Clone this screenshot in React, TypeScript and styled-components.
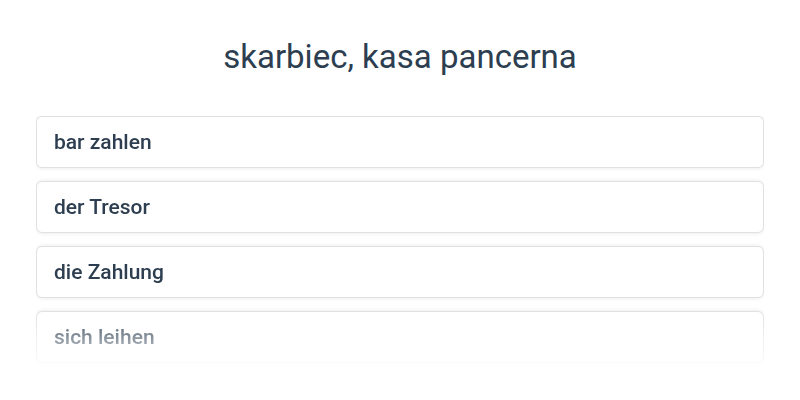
import React from "react";
import styled, { createGlobalStyle } from "styled-components";

const GlobalStyle = createGlobalStyle`
    html, body {
        margin: 0;
        padding: 0;
        background: #ffffff;
    }
    body {
        font-family: Roboto, "Liberation Sans", sans-serif;
        color: #2c3e50;
    }
`;

const Page = styled.div`
    width: 800px;
    height: 400px;
    box-sizing: border-box;
    padding: 37px 36px 0;
    display: flex;
    flex-direction: column;
    overflow: hidden;
`;

const Title = styled.h1`
    margin: 0 0 39px;
    font-size: 33px;
    font-weight: 400;
    line-height: 40px;
    text-align: center;
    color: #2c3e50;
`;

// List fades out towards the bottom edge
const List = styled.ul`
    list-style: none;
    margin: 0;
    padding: 0;
    height: 256px;
    display: flex;
    flex-direction: column;
    gap: 13px;
    -webkit-mask-image: linear-gradient(to bottom, #000 76%, transparent 100%);
    mask-image: linear-gradient(to bottom, #000 76%, transparent 100%);
`;

const Option = styled.li`
    box-sizing: border-box;
    height: 52px;
    flex-shrink: 0;
    display: flex;
    align-items: center;
    padding: 0 17px;
    border: 1px solid #dfe1e4;
    border-radius: 6px;
    background: #ffffff;
    box-shadow: 0 0 4px rgba(0, 0, 0, 0.1);
    font-size: 21px;
    font-weight: 500;
    color: #2c3e50;
    cursor: pointer;
`;

const options = ["bar zahlen", "der Tresor", "die Zahlung", "sich leihen"];

const App = (): React.ReactElement => (
    <>
        <GlobalStyle />
        <Page>
            <Title>skarbiec, kasa pancerna</Title>
            <List>
                {options.map(label => (
                    <Option key={label}>{label}</Option>
                ))}
            </List>
        </Page>
    </>
);

export default App;
